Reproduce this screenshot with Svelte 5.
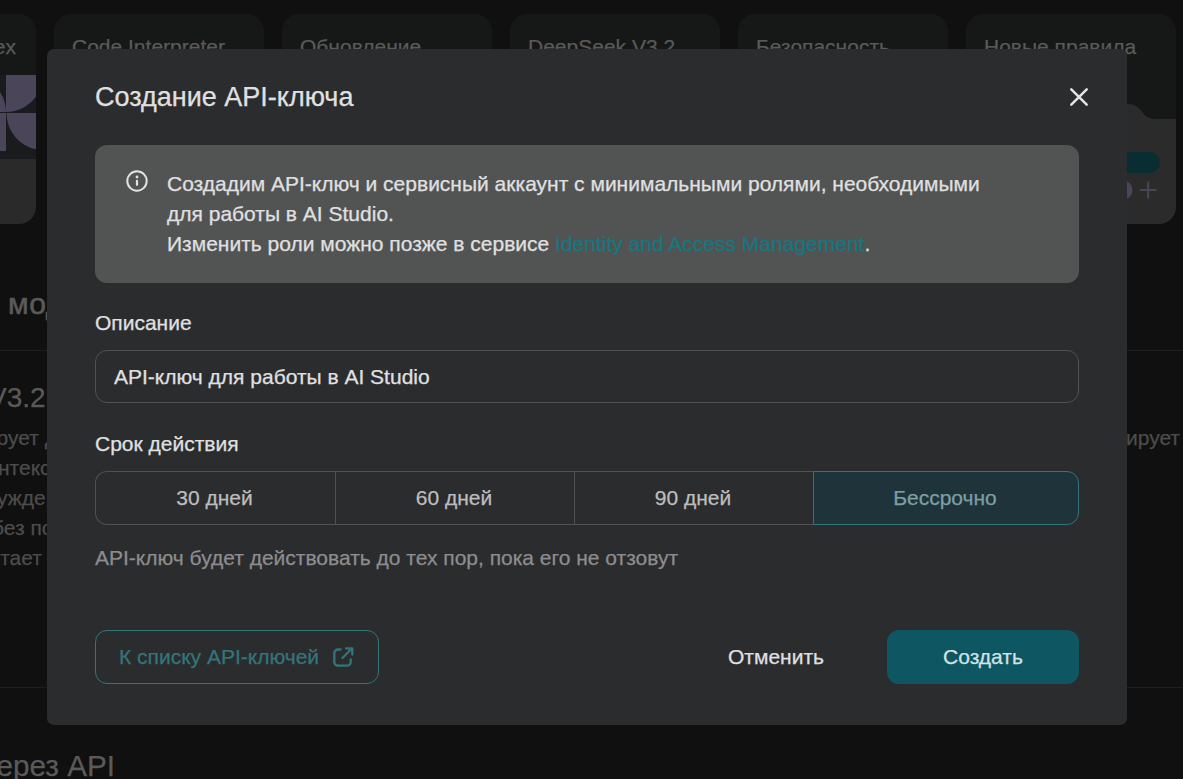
<script>
  const cards = ['Yandex', 'Code Interpreter', 'Обновление', 'DeepSeek V3.2', 'Безопасность', 'Новые правила'];
  const lines = [
    { text: 'рует д', x: -3.5 },
    { text: 'нтекс', x: -2 },
    { text: 'ужден', x: -3 },
    { text: 'без по', x: -8 },
    { text: 'отает', x: -11 }
  ];
  const terms = ['30 дней', '60 дней', '90 дней', 'Бессрочно'];
  let selected = $state(3);
  let description = $state('API-ключ для работы в AI Studio');
</script>

<div class="page">
  <div class="cards">
    {#each cards as title, i}
      <div class="card" class:first={i === 0}>
        <span>{title}</span>
        {#if i === 0}
          <svg class="art" width="36" height="149" viewBox="0 75 36 149">
            <path fill="#1a1b1d" d="M0 75h36v84H0z" />
            <path fill="#4a4559" d="M6 75h30v21.600A37 37 0 0 1 6 112zM0 92A37 37 0 0 1 6 112H0zM0 113h6v38H0zM6.500 113H36v36.300A37 37 0 0 1 6.500 113z" />
            <path fill="#2a2a2b" d="M0 159h36v65H0z" />
          </svg>
        {:else if i === 5}
          <svg class="art" width="60" height="120" viewBox="1116 104 60 120">
            <path fill="#2b2b2b" d="M1116 104h12c15 0 13 15 27 15h21v105h-60z" />
            <rect x="1100" y="152" width="60" height="21" rx="10.5" fill="#092e31" />
            <circle cx="1122.500" cy="190" r="10" fill="#4b4559" />
            <path d="M1140 190h16.500M1148.200 181.500v17" stroke="#4b4559" stroke-width="2" />
          </svg>
        {/if}
      </div>
    {/each}
  </div>
  <h2 class="heading">модели</h2>
  <section class="models">
    <div class="model">
      <h3>V3.2</h3>
      {#each lines as line}
        <p style:margin-left="{line.x}px">{line.text}</p>
      {/each}
    </div>
    <p class="next">ирует</p>
  </section>
  <h2 class="api">через API</h2>
</div>

<div class="overlay">
  <div class="modal" role="dialog" aria-labelledby="title">
    <header>
      <h1 id="title">Создание API-ключа</h1>
      <button class="close" aria-label="Закрыть">
        <svg width="20" height="20" viewBox="0 0 20 20" fill="none" stroke="#e3e3e6" stroke-width="2.500" stroke-linecap="round"><path d="M2.300 2.300l15.400 15.400M17.700 2.300L2.300 17.700" /></svg>
      </button>
    </header>

    <div class="notice">
      <svg width="22" height="22" viewBox="0 0 22 22"><circle cx="11" cy="11" r="9.700" fill="none" stroke="#e2e3e3" stroke-width="2" /><circle cx="11" cy="7" r="1.400" fill="#e2e3e3" /><path d="M11 10.800v4" stroke="#e2e3e3" stroke-width="2.200" stroke-linecap="round" /></svg>
      <div>
        Создадим API-ключ и сервисный аккаунт с минимальными ролями, необходимыми<br />
        для работы в AI Studio.<br />
        Изменить роли можно позже в сервисе <a href="#iam">Identity and Access Management</a>.
      </div>
    </div>

    <label for="desc">Описание</label>
    <input id="desc" bind:value={description} />

    <div class="label">Срок действия</div>
    <div class="terms">
      {#each terms as term, i}
        <button class:on={selected === i} onclick={() => (selected = i)}>{term}</button>
      {/each}
    </div>
    <p class="hint">API-ключ будет действовать до тех пор, пока его не отзовут</p>

    <footer>
      <button class="list">
        К списку API-ключей
        <svg width="21" height="20" viewBox="0 0 21 20" fill="none" stroke="#34757a" stroke-width="2.300" stroke-linecap="round" stroke-linejoin="round"><path d="M7.500 2.500H5a3.700 3.700 0 0 0-3.700 3.700V15A3.700 3.700 0 0 0 5 18.700h9a3.700 3.700 0 0 0 3.700-3.700v-2.500M9.500 11l9.500-9.700M13 1.300h6.300v6.300" /></svg>
      </button>
      <button class="cancel">Отменить</button>
      <button class="create">Создать</button>
    </footer>
  </div>
</div>

<style>
  :global(body) { background: #101010; }
  * { box-sizing: border-box; }
  .page, .overlay { width: 1183px; height: 779px; font-family: "Liberation Sans", Arial, sans-serif; font-size: 21px; -webkit-text-stroke: 0.25px currentColor; }
  .page { overflow: hidden; color: #5a5a5a; background: #101010; padding-top: 14px; }
  .cards { display: flex; gap: 18px; width: 1350px; margin-left: -174px; }
  .card { width: 210px; height: 210px; flex: none; border-radius: 17px; background: #161817; overflow: hidden; padding: 18px; line-height: 30px; display: flex; flex-direction: column; justify-content: space-between; }
  .card.first { text-align: right; }
  .card.first span { margin-right: 2px; }
  .art { align-self: flex-end; margin: 0 -18px -18px 0; flex: none; }
  h1, h2, h3, p { margin: 0; font-weight: 400; }
  h2 { font-size: 30px; line-height: 36px; }
  .heading { margin: 62px 0 0 8px; letter-spacing: 0.5px; -webkit-text-stroke-width: 0.6px; }
  .models { display: flex; justify-content: space-between; height: 338px; margin-top: 28px; border: solid #1d1d1d; border-width: 1px 0; color: #4c4c4c; line-height: 30px; }
  .model { padding-top: 30px; }
  h3 { font-size: 28px; line-height: 34px; margin: 0 0 8px -12px; color: #5a5a5a; }
  .next { padding: 72px 3px 0 0; }
  h2.api { margin: 60px 0 0 -19px; font-size: 29.700px; }

  .overlay { position: absolute; top: 0; left: 0; padding: 49px 56px 0 47px; color: #e0e0e1; }
  .modal { height: 676px; border-radius: 7px; background: #2b2c2e; padding: 30px 48px 41px; }
  header { display: flex; justify-content: space-between; align-items: center; height: 36px; margin-bottom: 30px; }
  h1 { font-size: 27px; line-height: 36px; }
  button { font: inherit; color: inherit; background: none; border: 0; padding: 0; }
  .close { display: flex; width: 20px; margin-right: -10px; }
  .notice { display: flex; gap: 19px; height: 138px; border-radius: 12px; background: #525453; padding: 24px 31px; line-height: 30px; white-space: nowrap; }
  .notice svg { flex: none; margin-top: 1px; }
  a { color: #187680; text-decoration: none; }
  label, .label { display: block; line-height: 30px; }
  label { margin: 25px 0 12px; }
  input { display: block; width: 100%; height: 53px; border: 1px solid #505153; border-radius: 12px; background: none; color: inherit; font: inherit; padding: 1px 18px 0; outline: none; }
  .label { margin: 26px 0 12px; }
  .terms { display: grid; grid-template-columns: 240px 239px 239px 266px; height: 54px; color: #bdbdbe; }
  .terms button { border: 1px solid #505153; border-right-width: 0; padding-right: 2px; }
  .terms button:first-child { border-radius: 12px 0 0 12px; }
  .terms button:last-child { border-right-width: 1px; border-radius: 0 12px 12px 0; }
  .terms .on { border: 1px solid #34757a; background: #1f343a; color: #7c9fa4; }
  .hint { line-height: 30px; margin-top: 18px; color: #8d8d8f; }
  footer { display: flex; height: 54px; margin-top: 57px; }
  .list { display: flex; align-items: center; justify-content: space-between; width: 284px; border: 1px solid #34757a; border-radius: 12px; color: #34757a; padding: 0 24px 0 23px; }
  .cancel { margin-left: auto; width: 144px; margin-right: 39px; }
  .create { width: 192px; border-radius: 12px; background: #0d5662; color: #d3e3e5; }
</style>
